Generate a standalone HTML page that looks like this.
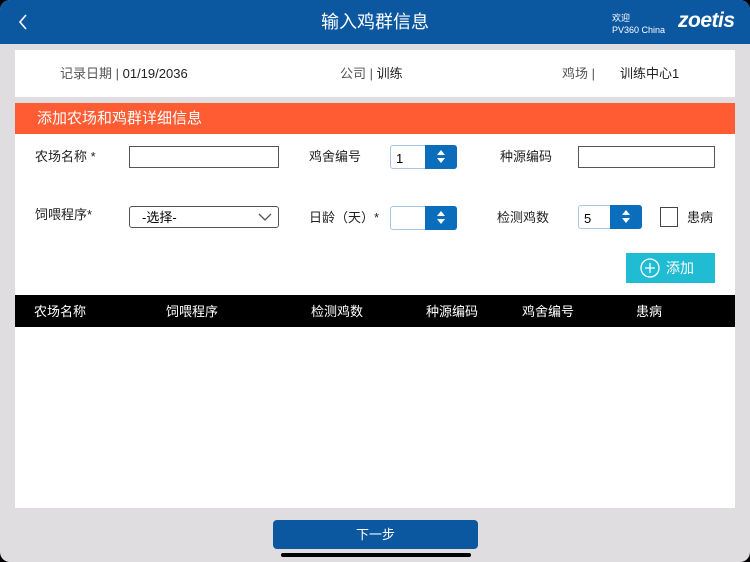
<!DOCTYPE html>
<html><head><meta charset="utf-8"><style>
*{margin:0;padding:0;box-sizing:border-box}
body{width:750px;height:562px;background:#000;font-family:"Liberation Sans","Noto Sans CJK SC",sans-serif;overflow:hidden;position:relative}
.scr{position:absolute;left:0;top:0;width:750px;height:562px;background:#e0dde0;border-radius:10px;overflow:hidden}
.hd{position:absolute;left:0;top:0;width:750px;height:44px;background:#0b57a0;color:#fff}
.abs{position:absolute}
.t{font-size:13px;color:#222;white-space:nowrap;line-height:15px}
.inp{position:absolute;border:1px solid #555;background:#fff;height:22px}
.spin{position:absolute;height:24px;width:67px;border:1px solid #aac4e4;border-radius:3px;background:#fff;font-size:13px;line-height:15px;padding:5px 0 0 5px}
.spin b{position:absolute;right:-1px;top:-1px;width:32px;height:24px;background:#0b6ebd;border-radius:0 3px 3px 0}
.spin b:before{content:"";position:absolute;left:12px;top:5px;border:4px solid transparent;border-bottom:5px solid #fff;border-top:0}
.spin b:after{content:"";position:absolute;left:12px;top:13px;border:4px solid transparent;border-top:5px solid #fff;border-bottom:0}
.th{font-size:13px;color:#fff;position:absolute;top:9px;line-height:15px}
</style></head><body><div class="scr">
<div class="hd">
<svg class="abs" style="left:18px;top:14px" width="10" height="16"><path d="M8 1L2 8l6 7" stroke="#fff" stroke-width="1.6" fill="none"/></svg>
<div class="abs" style="left:0;width:750px;top:11px;text-align:center;font-size:18px;line-height:22px">输入鸡群信息</div>
<div class="abs" style="left:612px;top:12px;font-size:9px;line-height:12px">欢迎<br>PV360 China</div>
<div class="abs" style="left:678px;top:9px;font-size:21px;line-height:24px;font-weight:bold;font-style:italic;letter-spacing:-0.5px">zoetis</div>
</div>
<div class="abs" style="left:15px;top:50px;width:720px;height:47px;background:#fff"></div>
<div class="abs t" style="left:60px;top:66px"><span style="color:#555">记录日期 | </span>01/19/2036</div>
<div class="abs t" style="left:340px;top:66px"><span style="color:#555">公司 | </span>训练</div>
<div class="abs t" style="left:562px;top:66px;color:#555">鸡场 |</div>
<div class="abs t" style="left:620px;top:66px">训练中心1</div>
<div class="abs" style="left:15px;top:103px;width:720px;height:31px;background:#ff5c33;color:#fff;font-size:15px;line-height:18px;padding:7px 0 0 22px">添加农场和鸡群详细信息</div>
<div class="abs" style="left:15px;top:134px;width:720px;height:161px;background:#fff"></div>
<div class="abs t" style="left:35px;top:149px">农场名称 *</div>
<div class="inp" style="left:129px;top:146px;width:150px"></div>
<div class="abs t" style="left:309px;top:149px">鸡舍编号</div>
<div class="spin" style="left:390px;top:145px">1<b></b></div>
<div class="abs t" style="left:500px;top:149px">种源编码</div>
<div class="inp" style="left:578px;top:146px;width:137px"></div>
<div class="abs t" style="left:35px;top:207px">饲喂程序*</div>
<div class="inp" style="left:129px;top:206px;width:150px;border-radius:3px;font-size:13px;line-height:15px;padding:3px 0 0 12px">-选择-<svg class="abs" style="left:128px;top:6px" width="14" height="9"><path d="M1 1l6 6 6-6" stroke="#555" stroke-width="1.3" fill="none"/></svg></div>
<div class="abs t" style="left:309px;top:210px">日龄（天）*</div>
<div class="spin" style="left:390px;top:206px"><b></b></div>
<div class="abs t" style="left:497px;top:210px">检测鸡数</div>
<div class="spin" style="left:578px;top:205px;width:64px">5<b></b></div>
<div class="abs" style="left:660px;top:207px;width:18px;height:20px;border:1px solid #444"></div>
<div class="abs t" style="left:687px;top:210px">患病</div>
<div class="abs" style="left:626px;top:253px;width:89px;height:30px;background:#1fbcd3;color:#fff;font-size:14px;line-height:16px;padding:7px 0 0 40px">添加<svg class="abs" style="left:14px;top:5px" width="20" height="20"><circle cx="10" cy="10" r="9" stroke="#fff" stroke-width="1.3" fill="none"/><path d="M10 5v10M5 10h10" stroke="#fff" stroke-width="1.3"/></svg></div>
<div class="abs" style="left:15px;top:295px;width:720px;height:32px;background:#000">
<span class="th" style="left:19px">农场名称</span><span class="th" style="left:151px">饲喂程序</span><span class="th" style="left:296px">检测鸡数</span><span class="th" style="left:411px">种源编码</span><span class="th" style="left:507px">鸡舍编号</span><span class="th" style="left:621px">患病</span></div>
<div class="abs" style="left:15px;top:327px;width:720px;height:181px;background:#fff"></div>
<div class="abs" style="left:273px;top:520px;width:205px;height:29px;background:#0b57a0;border-radius:4px;color:#fff;font-size:13px;line-height:15px;text-align:center;padding-top:7px">下一步</div>
<div class="abs" style="left:281px;top:553px;width:190px;height:4px;background:#000;border-radius:2px"></div>
</div></body></html>
